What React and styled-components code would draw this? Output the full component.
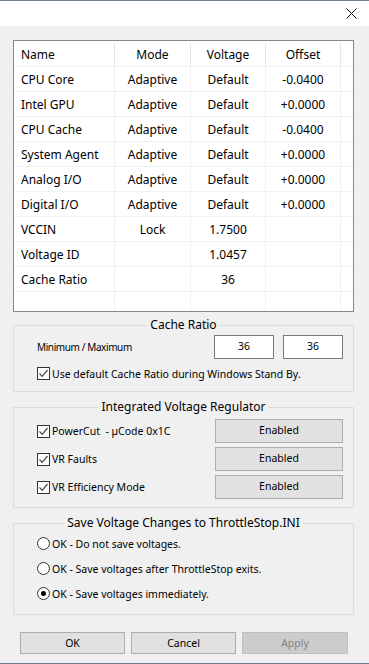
import styled, { createGlobalStyle } from "styled-components";

const GlobalStyle = createGlobalStyle`
	html, body {
		margin: 0;
		padding: 0;
		background: #f0f0f0;
	}
	* {
		box-sizing: border-box;
	}
`;

// 창 전체
const Window = styled.div`
	width: 369px;
	height: 664px;
	display: flex;
	flex-direction: column;
	background: #f0f0f0;
	border-top: 1px solid #6f7d8e;
	border-bottom: 1px solid #6f7d8e;
	font-family: "Noto Sans", "Liberation Sans", sans-serif;
	font-size: 12px;
	color: #000;
`;

const TitleBar = styled.div`
	height: 25px;
	background: #fff;
	display: flex;
	justify-content: flex-end;
	align-items: flex-start;
	padding: 7px 12px 0 0;
`;

const Body = styled.div`
	flex: 1;
	display: flex;
	flex-direction: column;
	padding: 14px 15px 0 13px;
`;

// 전압 테이블
const TableBox = styled.div`
	height: 272px;
	border: 1px solid #828790;
	background: #fff;
	display: flex;
	flex-direction: column;
`;

const Row = styled.div`
	display: grid;
	grid-template-columns: 101px 76px 75px 75px 1fr;
	height: 25px;
	border-top: ${(p) => (p.$head ? "none" : "1px solid #f0f0f0")};
	flex: ${(p) => (p.$fill ? 1 : "none")};
`;

const Cell = styled.div`
	display: flex;
	align-items: center;
	justify-content: ${(p) => (p.$left ? "flex-start" : "center")};
	padding-left: ${(p) => (p.$left ? "7px" : "0")};
	border-right: ${(p) => (p.$last ? "none" : "1px solid #f0f0f0")};
	white-space: nowrap;
`;

const HeadCell = styled(Cell)`
	margin-top: 2px;
	border-right: ${(p) => (p.$last ? "none" : "1px solid #e5e5e5")};
`;

// 그룹 박스
const Group = styled.div`
	margin-top: ${(p) => p.$top}px;
	height: ${(p) => p.$h}px;
	border: 1px solid #dcdcdc;
	display: flex;
	flex-direction: column;
	padding: 0 10px 0 23px;
	font-size: 10.5px;
`;

const GroupTitle = styled.div`
	align-self: center;
	margin: -9px 0 0 -13px;
	padding: 0 3px;
	background: #f0f0f0;
	font-size: 12px;
	line-height: 16px;
`;

const RatioRow = styled.div`
	display: flex;
	align-items: center;
	height: 24px;
	margin-top: 2px;
`;

const SmallLabel = styled.div`
	flex: 1;
	font-size: 10px;
	letter-spacing: -0.4px;
`;

const NumBox = styled.div`
	width: 60px;
	height: 24px;
	margin-left: ${(p) => (p.$gap ? "9px" : "0")};
	border: 1px solid #7a7a7a;
	background: #fff;
	display: flex;
	justify-content: center;
	padding-top: 3px;
	line-height: 15px;
`;

const CheckRow = styled.div`
	display: flex;
	align-items: center;
	height: ${(p) => p.$h || 24}px;
	margin-top: ${(p) => p.$mt || 0}px;
`;

const CheckBox = styled.div`
	width: 13px;
	height: 13px;
	border: 1px solid #333;
	background: #fff;
	margin-right: 2px;
	display: flex;
	align-items: center;
	justify-content: center;
	flex: none;
`;

const Radio = styled.div`
	width: 13px;
	height: 13px;
	border: 1px solid #333;
	border-radius: 50%;
	background: #fff;
	margin-right: 2px;
	display: flex;
	align-items: center;
	justify-content: center;
	flex: none;
	&::after {
		content: "";
		width: 5px;
		height: 5px;
		border-radius: 50%;
		background: ${(p) => (p.$on ? "#000" : "transparent")};
	}
`;

const Label = styled.span`
	flex: 1;
	white-space: pre;
`;

const IvrList = styled.div`
	display: flex;
	flex-direction: column;
	gap: 4px;
	margin-top: 4px;
`;

const StateButton = styled.div`
	width: 128px;
	height: 24px;
	border: 1px solid #adadad;
	background: #e1e1e1;
	display: flex;
	justify-content: center;
	padding-top: 3px;
	line-height: 15px;
`;

const Footer = styled.div`
	display: flex;
	gap: 6px;
	margin-top: 17px;
	padding-left: 7px;
	font-size: 10.5px;
`;

const DialogButton = styled.div`
	width: ${(p) => p.$w || 105}px;
	height: 22px;
	border: 1px solid ${(p) => (p.$disabled ? "#bfbfbf" : "#adadad")};
	background: ${(p) => (p.$disabled ? "#cccccc" : "#e1e1e1")};
	color: ${(p) => (p.$disabled ? "#838383" : "#000")};
	display: flex;
	align-items: center;
	justify-content: center;
`;

const rows = [
	["CPU Core", "Adaptive", "Default", "-0.0400"],
	["Intel GPU", "Adaptive", "Default", "+0.0000"],
	["CPU Cache", "Adaptive", "Default", "-0.0400"],
	["System Agent", "Adaptive", "Default", "+0.0000"],
	["Analog I/O", "Adaptive", "Default", "+0.0000"],
	["Digital I/O", "Adaptive", "Default", "+0.0000"],
	["VCCIN", "Lock", "1.7500", ""],
	["Voltage ID", "", "1.0457", ""],
	["Cache Ratio", "", "36", ""],
];

const Check = () => (
	<svg width="11" height="11" viewBox="0 0 11 11">
		<path d="M1.5 5.5 L4.2 8.3 L9.5 2" fill="none" stroke="#444" strokeWidth="1.2" />
	</svg>
);

function App() {
	return (
		<Window>
			<GlobalStyle />
			<TitleBar>
				<svg width="11" height="11" viewBox="0 0 11 11">
					<path d="M0.5 0.5 L10.5 10.5 M10.5 0.5 L0.5 10.5" stroke="#111" strokeWidth="1" />
				</svg>
			</TitleBar>
			<Body>
				<TableBox>
					<Row $head>
						<HeadCell $left>Name</HeadCell>
						<HeadCell>Mode</HeadCell>
						<HeadCell>Voltage</HeadCell>
						<HeadCell>Offset</HeadCell>
						<HeadCell $last />
					</Row>
					{rows.map((r) => (
						<Row key={r[0]}>
							<Cell $left>{r[0]}</Cell>
							<Cell>{r[1]}</Cell>
							<Cell>{r[2]}</Cell>
							<Cell>{r[3]}</Cell>
							<Cell $last />
						</Row>
					))}
					<Row $fill>
						<Cell />
						<Cell />
						<Cell />
						<Cell />
						<Cell $last />
					</Row>
				</TableBox>

				<Group $top={13} $h={67}>
					<GroupTitle>Cache Ratio</GroupTitle>
					<RatioRow>
						<SmallLabel>Minimum / Maximum</SmallLabel>
						<NumBox>36</NumBox>
						<NumBox $gap>36</NumBox>
					</RatioRow>
					<CheckRow $h={13} $mt={8}>
						<CheckBox>
							<Check />
						</CheckBox>
						<Label>Use default Cache Ratio during Windows Stand By.</Label>
					</CheckRow>
				</Group>

				<Group $top={15} $h={101}>
					<GroupTitle>Integrated Voltage Regulator</GroupTitle>
					<IvrList>
						{["PowerCut  - µCode 0x1C", "VR Faults", "VR Efficiency Mode"].map((t) => (
							<CheckRow key={t}>
								<CheckBox>
									<Check />
								</CheckBox>
								<Label>{t}</Label>
								<StateButton>Enabled</StateButton>
							</CheckRow>
						))}
					</IvrList>
				</Group>

				<Group $top={15} $h={92}>
					<GroupTitle>Save Voltage Changes to ThrottleStop.INI</GroupTitle>
					<CheckRow $h={25}>
						<Radio />
						<Label>OK - Do not save voltages.</Label>
					</CheckRow>
					<CheckRow $h={25}>
						<Radio />
						<Label>OK - Save voltages after ThrottleStop exits.</Label>
					</CheckRow>
					<CheckRow $h={25}>
						<Radio $on />
						<Label>OK - Save voltages immediately.</Label>
					</CheckRow>
				</Group>

				<Footer>
					<DialogButton>OK</DialogButton>
					<DialogButton>Cancel</DialogButton>
					<DialogButton $w={106} $disabled>
						Apply
					</DialogButton>
				</Footer>
			</Body>
		</Window>
	);
}

export default App;
